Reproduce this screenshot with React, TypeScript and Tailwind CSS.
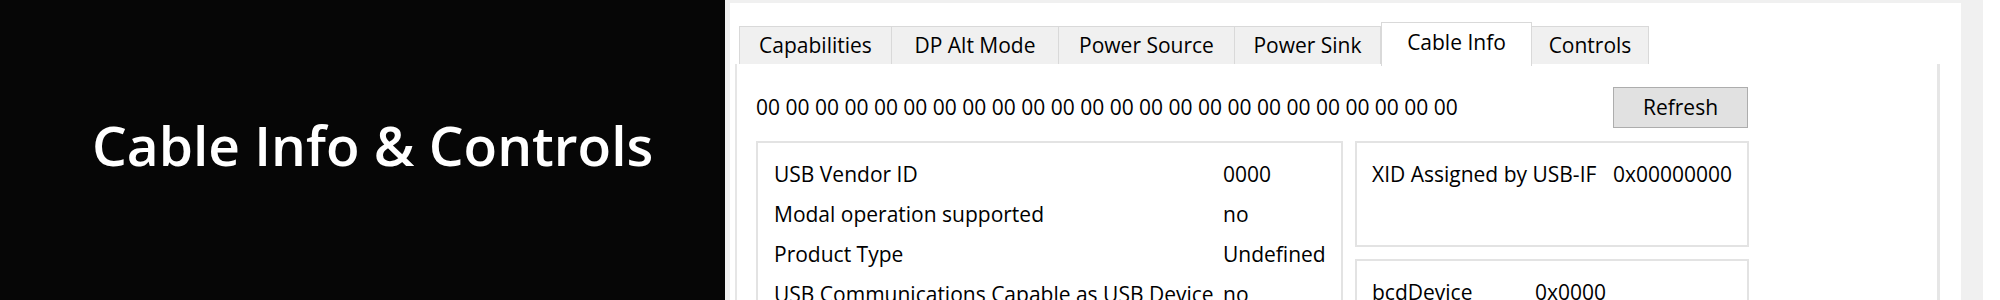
const tabs = [
  { label: 'Capabilities', w: 'w-[153px]' },
  { label: 'DP Alt Mode', w: 'w-[168px]' },
  { label: 'Power Source', w: 'w-[177px]' },
  { label: 'Power Sink', w: 'w-[147px]' },
  { label: 'Cable Info', w: 'w-[151px]', active: true },
  { label: 'Controls', w: 'w-[118px]' },
];

const cableRows = [
  ['USB Vendor ID', '0000'],
  ['Modal operation supported', 'no'],
  ['Product Type', 'Undefined'],
  ['USB Communications Capable as USB Device', 'no'],
];

const hex = Array(24).fill('00').join(' ');

export default function App() {
  return (
    <div className="flex h-[300px] w-[2000px] overflow-hidden bg-[#f0f0f0] font-['Open_Sans',sans-serif] text-[21px] text-black">
      {/* title slide */}
      <div className="w-[725px] shrink-0 bg-[#060606] pl-[92px] pt-[117px]">
        <h1 className="text-[55px] font-semibold leading-none text-white">Cable Info &amp; Controls</h1>
      </div>

      {/* app window */}
      <div className="ml-[5px] mt-[3px] flex w-[1231px] shrink-0 flex-col bg-white">
        <div className="ml-[9px] mt-[19px] flex h-[42px] items-end">
          {tabs.map((t) =>
            t.active ? (
              <div
                key={t.label}
                className={`${t.w} relative z-10 -mb-[2px] flex h-[44px] items-center justify-center border border-b-0 border-[#d9d9d9] bg-white pb-[4px]`}
              >
                {t.label}
              </div>
            ) : (
              <div
                key={t.label}
                className={`${t.w} -ml-px flex h-[38px] items-center justify-center border border-b-0 border-[#d9d9d9] bg-[#f0f0f0] first:ml-0`}
              >
                {t.label}
              </div>
            )
          )}
        </div>

        <div className="ml-[5px] flex w-[1205px] flex-1 flex-col border-l-2 border-r-[3px] border-[#e6e6e6]">
          <div className="mt-[23px] flex h-[41px] items-center pl-[19px]">
            <div className="w-[857px] whitespace-nowrap">{hex}</div>
            <button className="h-[41px] w-[135px] border border-[#adadad] bg-[#e1e1e1]">Refresh</button>
          </div>

          <div className="mt-[13px] flex gap-[12px] pl-[19px]">
            <div className="h-[200px] w-[587px] border-2 border-[#e3e3e3] pl-[16px] pt-[11px]">
              {cableRows.map(([k, v]) => (
                <div key={k} className="grid h-[40px] grid-cols-[449px_auto] items-center whitespace-nowrap leading-[40px]">
                  <span>{k}</span>
                  <span>{v}</span>
                </div>
              ))}
            </div>

            <div className="flex w-[394px] flex-col gap-[12px]">
              <div className="h-[106px] border-2 border-[#e3e3e3] pl-[15px] pt-[11px]">
                <div className="grid h-[40px] grid-cols-[241px_auto] whitespace-nowrap leading-[40px]">
                  <span>XID Assigned by USB-IF</span>
                  <span>0x00000000</span>
                </div>
              </div>
              <div className="h-[106px] border-2 border-[#e3e3e3] pl-[15px] pt-[11px]">
                <div className="grid h-[40px] grid-cols-[163px_auto] whitespace-nowrap leading-[40px]">
                  <span>bcdDevice</span>
                  <span>0x0000</span>
                </div>
              </div>
            </div>
          </div>
        </div>
      </div>

      <div className="ml-[22px] w-[17px] shrink-0 bg-white" />
    </div>
  );
}
